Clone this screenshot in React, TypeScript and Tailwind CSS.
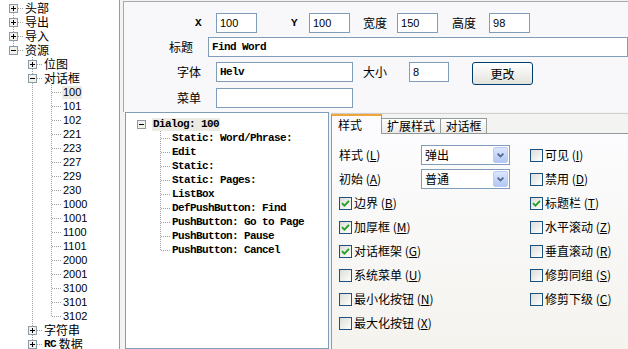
import type { ReactNode } from "react";

type Seg = "none" | "pipe" | "tee" | "end" | "start" | "only";

const DOT = "#a0a0a0";

function TreeCell({ seg, box }: { seg: Seg; box?: "plus" | "minus" }) {
  return (
    <svg width="19" height="14" className="block shrink-0" shapeRendering="crispEdges">
      {(seg === "pipe" || seg === "tee") && (
        <line x1="9.5" y1="0" x2="9.5" y2="14" stroke={DOT} strokeDasharray="1 1" />
      )}
      {seg === "end" && <line x1="9.5" y1="0" x2="9.5" y2="8" stroke={DOT} strokeDasharray="1 1" />}
      {seg === "start" && <line x1="9.5" y1="8" x2="9.5" y2="14" stroke={DOT} strokeDasharray="1 1" />}
      {(seg === "tee" || seg === "end" || seg === "start") && (
        <line x1="10" y1="7.5" x2="19" y2="7.5" stroke={DOT} strokeDasharray="1 1" />
      )}
      {box && (
        <>
          <rect x="5.5" y="3.5" width="8" height="8" fill="#f1f1ed" stroke="#8c9aa6" />
          <line x1="7" y1="7.5" x2="12" y2="7.5" stroke="#000" />
          {box === "plus" && <line x1="9.5" y1="5" x2="9.5" y2="10" stroke="#000" />}
        </>
      )}
    </svg>
  );
}

function TreeRow({
  cells,
  box,
  sel,
  children,
}: {
  cells: Seg[];
  box?: "plus" | "minus";
  sel?: boolean;
  children: ReactNode;
}) {
  return (
    <div className="flex h-[14px] items-center whitespace-nowrap">
      {cells.map((c, i) => (
        <TreeCell key={i} seg={c} box={i === cells.length - 1 ? box : undefined} />
      ))}
      <span className={`ml-[1px] flex h-[13px] items-center px-[1px] ${sel ? "bg-[#ecebe3]" : ""}`}>{children}</span>
    </div>
  );
}

const LEAVES = ["100", "101", "102", "221", "223", "227", "229", "230", "1000", "1001", "1100", "1101", "2000", "2001", "3100", "3101", "3102"];

const CHILDREN = [
  "Static: Word/Phrase:",
  "Edit",
  "Static:",
  "Static: Pages:",
  "ListBox",
  "DefPushButton: Find",
  "PushButton: Go to Page",
  "PushButton: Pause",
  "PushButton: Cancel",
];

// SimSun-like latin: a serif mono at 6px per char
const MONO = "font-['Liberation_Mono',monospace] text-[11px] font-bold tracking-[-0.6px]";
const NUM = "font-['Liberation_Sans',sans-serif] text-[11px]";

function Field({ w, children }: { w: string; children?: ReactNode }) {
  return (
    <div className={`flex h-[20px] shrink-0 items-center border border-[#7f9db9] bg-white pl-[3px] ${w}`}>{children}</div>
  );
}

function Acc({ text, k }: { text: string; k: string }) {
  return (
    <span className="whitespace-nowrap">
      {text} (<span className="underline underline-offset-[1px]">{k}</span>)
    </span>
  );
}

function CheckBox({ on }: { on?: boolean }) {
  return (
    <span className="flex h-[13px] w-[13px] shrink-0 items-center justify-center border border-[#1c5180] bg-linear-to-br from-[#dcdcd7] to-white">
      {on && (
        <svg width="9" height="9" viewBox="0 0 9 9">
          <path d="M1 4.2 L3.4 6.6 L8 1.8" stroke="#21a121" strokeWidth="1.8" fill="none" />
        </svg>
      )}
    </span>
  );
}

function CheckItem({ text, k, on }: { text: string; k: string; on?: boolean }) {
  return (
    <div className="flex items-center gap-[2px]">
      <CheckBox on={on} />
      <Acc text={text} k={k} />
    </div>
  );
}

function Select({ value }: { value: string }) {
  return (
    <div className="flex h-[20px] w-[89px] items-center justify-between border border-[#7f9db9] bg-white pl-[3px] pr-[1px]">
      <span>{value}</span>
      <span className="flex h-[16px] w-[15px] items-center justify-center rounded-[2px] border border-[#bccbef] bg-linear-to-b from-[#dbe6fd] to-[#b3c7f4]">
        <svg width="7" height="5" viewBox="0 0 7 5">
          <path d="M0.6 0.6 L3.5 3.6 L6.4 0.6" stroke="#4d6185" strokeWidth="1.6" fill="none" />
        </svg>
      </span>
    </div>
  );
}

const ROWS: { left: ReactNode; right?: ReactNode }[] = [
  {
    left: (
      <div className="flex items-center">
        <span className="w-[82px]"><Acc text="样式" k="L" /></span>
        <Select value="弹出" />
      </div>
    ),
    right: <CheckItem text="可见" k="I" />,
  },
  {
    left: (
      <div className="flex items-center">
        <span className="w-[82px]"><Acc text="初始" k="A" /></span>
        <Select value="普通" />
      </div>
    ),
    right: <CheckItem text="禁用" k="D" />,
  },
  { left: <CheckItem text="边界" k="B" on />, right: <CheckItem text="标题栏" k="T" on /> },
  { left: <CheckItem text="加厚框" k="M" on />, right: <CheckItem text="水平滚动" k="Z" /> },
  { left: <CheckItem text="对话框架" k="G" on />, right: <CheckItem text="垂直滚动" k="R" /> },
  { left: <CheckItem text="系统菜单" k="U" />, right: <CheckItem text="修剪同组" k="S" /> },
  { left: <CheckItem text="最小化按钮" k="N" />, right: <CheckItem text="修剪下级" k="C" /> },
  { left: <CheckItem text="最大化按钮" k="X" /> },
];

export default function App() {
  return (
    <div className="flex h-[349px] w-[628px] overflow-hidden bg-white font-['Noto_Sans_CJK_SC',sans-serif] text-[12px] leading-[14px] text-black">
      {/* resource tree */}
      <div className="w-[119px] shrink-0 overflow-hidden bg-white pl-[4px] pt-[1px]">
        <TreeRow cells={["start"]} box="plus">头部</TreeRow>
        <TreeRow cells={["tee"]} box="plus">导出</TreeRow>
        <TreeRow cells={["tee"]} box="plus">导入</TreeRow>
        <TreeRow cells={["end"]} box="minus">资源</TreeRow>
        <TreeRow cells={["none", "tee"]} box="plus">位图</TreeRow>
        <TreeRow cells={["none", "tee"]} box="minus">对话框</TreeRow>
        {LEAVES.map((n, i) => (
          <TreeRow key={n} cells={["none", "pipe", i === LEAVES.length - 1 ? "end" : "tee"]} sel={n === "100"}>
            <span className={NUM}>{n}</span>
          </TreeRow>
        ))}
        <TreeRow cells={["none", "tee"]} box="plus">字符串</TreeRow>
        <TreeRow cells={["none", "end"]} box="plus">
          <span className={MONO}>RC</span>&nbsp;数据
        </TreeRow>
      </div>

      {/* editor */}
      <div className="flex min-w-0 flex-1 flex-col overflow-hidden border-l border-[#9a9a9a] bg-[#f3f3f1] pt-[1px]">
        <div className="ml-[3px] h-[111px] shrink-0 overflow-hidden border-l border-t border-[#a8a8a8] bg-[#f8f8fa]">
          <div className="mt-[11px] flex items-center">
            <span className={`w-[80px] pr-[3px] text-right ${MONO}`}>X</span>
            <div className="ml-[12px]"><Field w="w-[41px]"><span className={NUM}>100</span></Field></div>
            <span className={`w-[43px] pr-[3px] text-right ${MONO}`}>Y</span>
            <div className="ml-[9px]"><Field w="w-[41px]"><span className={NUM}>100</span></Field></div>
            <span className="ml-[13px]">宽度</span>
            <div className="ml-[10px]"><Field w="w-[41px]"><span className={NUM}>150</span></Field></div>
            <span className="ml-[14px]">高度</span>
            <div className="ml-[13px]"><Field w="w-[41px]"><span className={NUM}>98</span></Field></div>
          </div>
          <div className="mt-[4px] flex items-center">
            <span className="w-[77px] text-right">标题</span>
            <div className="ml-[15px]"><Field w="w-[420px]"><span className={MONO}>Find Word</span></Field></div>
          </div>
          <div className="mt-[5px] flex items-start">
            <span className="flex h-[20px] w-[77px] items-center justify-end">字体</span>
            <div className="ml-[15px]"><Field w="w-[137px]"><span className={MONO}>Helv</span></Field></div>
            <span className="ml-[10px] flex h-[20px] items-center">大小</span>
            <div className="ml-[22px]"><Field w="w-[40px]"><span className={NUM}>8</span></Field></div>
            <button className="ml-[23px] flex h-[23px] w-[61px] items-center justify-center rounded-[3px] border border-[#003c74] bg-linear-to-b from-white to-[#e4e3dc]">
              更改
            </button>
          </div>
          <div className="mt-[3px] flex items-center">
            <span className="w-[77px] text-right">菜单</span>
            <div className="ml-[15px]"><Field w="w-[137px]" /></div>
          </div>
        </div>

        <div className="flex min-h-0 flex-1">
          {/* dialog item tree */}
          <div className="ml-[5px] w-[204px] shrink-0 border border-[#7f9db9] bg-white pl-[6px] pt-[4px]">
            <TreeRow cells={["only"]} box="minus" sel>
              <span className={MONO}>Dialog: 100</span>
            </TreeRow>
            {CHILDREN.map((c, i) => (
              <TreeRow key={c} cells={["none", i === CHILDREN.length - 1 ? "end" : "tee"]}>
                <span className={`${MONO} whitespace-pre`}>{c}</span>
              </TreeRow>
            ))}
          </div>

          {/* property tabs */}
          <div className="ml-[2px] mt-[1px] flex min-w-0 flex-1 flex-col border-t border-[#cfcfcf]">
            <div className="flex h-[19px] shrink-0 items-end">
              <div className="relative z-10 mb-[-1px] h-[20px] w-[51px] border-x border-t-2 border-x-[#919b9c] border-t-[#eea53a] bg-[#fcfcfe] pl-[6px] pt-[2px]">
                样式
              </div>
              <div className="flex h-[15px] w-[59px] items-center justify-center border-r border-t border-[#919b9c] bg-linear-to-b from-white to-[#ecebe6]">
                扩展样式
              </div>
              <div className="flex h-[15px] w-[46px] items-center justify-center border-r border-t border-[#919b9c] bg-linear-to-b from-white to-[#ecebe6]">
                对话框
              </div>
            </div>
            <div className="flex-1 border-l border-t border-[#919b9c] bg-linear-to-b from-[#fcfcfe] to-[#f4f3ee] pt-[9px]">
              {ROWS.map((r, i) => (
                <div key={i} className="flex h-[24px] items-center">
                  <div className="w-[198px] shrink-0 pl-[7px]">{r.left}</div>
                  <div>{r.right}</div>
                </div>
              ))}
            </div>
          </div>
        </div>
      </div>
    </div>
  );
}
